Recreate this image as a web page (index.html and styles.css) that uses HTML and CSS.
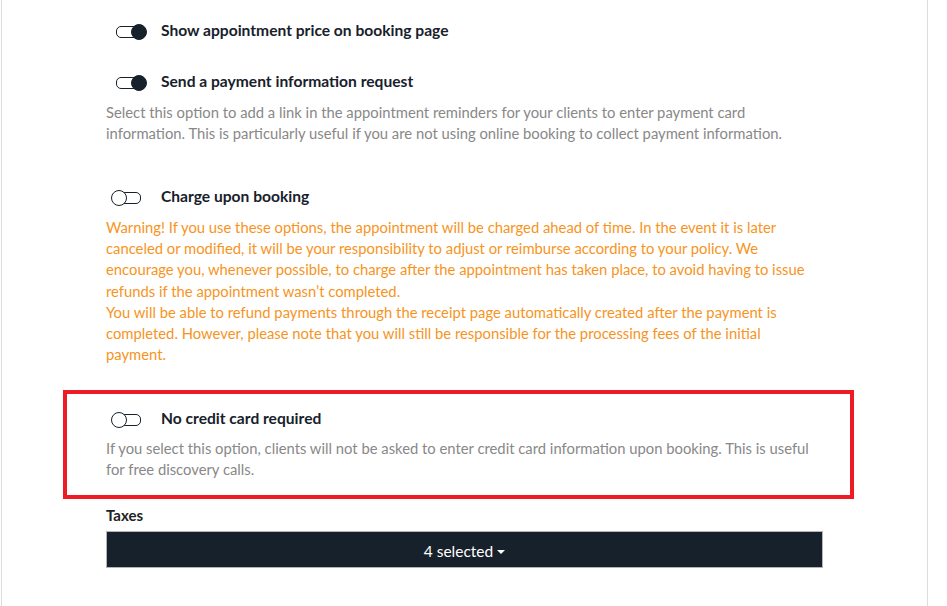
FILE: index.html
```html
<!DOCTYPE html>
<html lang="en">
<head>
<meta charset="utf-8">
<title>Payment settings</title>
<link rel="stylesheet" href="styles.css">
</head>
<body>
<div class="page">
  <div class="content">
    <div class="option opt-first">
      <div class="option-row">
        <span class="toggle on"></span>
        <span class="option-title">Show appointment price on booking page</span>
      </div>
    </div>
    <div class="option opt-second">
      <div class="option-row">
        <span class="toggle on"></span>
        <span class="option-title">Send a payment information request</span>
      </div>
      <p class="desc">Select this option to add a link in the appointment reminders for your clients to enter payment card information. This is particularly useful if you are not using online booking to collect payment information.</p>
    </div>
    <div class="option opt-third">
      <div class="option-row">
        <span class="toggle"></span>
        <span class="option-title">Charge upon booking</span>
      </div>
      <p class="desc warn">Warning! If you use these options, the appointment will be charged ahead of time. In the event it is later canceled or modified, it will be your responsibility to adjust or reimburse according to your policy. We encourage you, whenever possible, to charge after the appointment has taken place, to avoid having to issue refunds if the appointment wasn’t completed.<br>You will be able to refund payments through the receipt page automatically created after the payment is completed. However, please note that you will still be responsible for the processing fees of the initial payment.</p>
    </div>
    <div class="option highlighted">
      <div class="option-row">
        <span class="toggle"></span>
        <span class="option-title">No credit card required</span>
      </div>
      <p class="desc">If you select this option, clients will not be asked to enter credit card information upon booking. This is useful for free discovery calls.</p>
    </div>
    <div class="field">
      <label class="field-label">Taxes</label>
      <button class="select-btn" type="button">4 selected <span class="caret"></span></button>
    </div>
  </div>
</div>
</body>
</html>
```
FILE: styles.css
```css
* { box-sizing: border-box; }
html, body { margin: 0; padding: 0; background: #fff; }
body {
  font-family: Lato, "Open Sans", "Liberation Sans", sans-serif;
  font-size: 15px;
  color: #17212b;
}
.page {
  margin-left: 1px;
  width: 927px;
  min-height: 606px;
  border-left: 1px solid #dcdcdc;
  border-right: 1px solid #dcdcdc;
}
.content {
  width: 717px;
  margin-left: 104px;
  padding-top: 20px;
}
.option-row {
  display: flex;
  align-items: center;
  height: 21px;
}
.option-title {
  font-weight: 700;
  font-size: 15.6px;
  line-height: 21px;
  color: #17212b;
}
.desc {
  margin: 10px 0 0;
  font-size: 14.8px;
  line-height: 21.2px;
  color: #888888;
}
.desc.warn { color: #f7941d; margin-top: 9.5px; }
.opt-first { margin-bottom: 30px; }
.opt-second { margin-bottom: 42px; }
.opt-third { margin-bottom: 25px; }

.toggle {
  position: relative;
  flex: none;
  width: 34px;
  height: 14px;
  margin-left: 5px;
  margin-right: 16px;
}
.toggle::before {
  content: "";
  position: absolute;
  left: 5px;
  right: 4px;
  top: 2px;
  height: 10px;
  border: 1.3px solid #17212b;
  border-radius: 5px;
  background: #fff;
}
.toggle::after {
  content: "";
  position: absolute;
  left: 0;
  top: 0;
  width: 14px;
  height: 14px;
  border-radius: 50%;
  border: 1.3px solid #17212b;
  background: #fff;
}
.toggle.on::after {
  left: 20px;
  background: #17212b;
}

.highlighted {
  margin: 0 -31px 0 -43px;
  padding: 14px 27px 14.5px 39px;
  border: 4px solid #ed1c24;
}
.highlighted .desc { margin-top: 8.5px; }
.field { margin-top: 6px; }
.field-label {
  display: block;
  font-weight: 700;
  font-size: 15px;
  line-height: 21px;
  color: #222;
  margin-bottom: 5px;
}
.select-btn {
  display: flex;
  align-items: center;
  justify-content: center;
  width: 717px;
  height: 37px;
  background: #17212b;
  border: 1px solid #b5b5b5;
  color: #fff;
  font-family: Lato, "Open Sans", "Liberation Sans", sans-serif;
  font-size: 15.5px;
  padding: 3px 0 0;
}
.caret {
  display: inline-block;
  width: 0;
  height: 0;
  margin-left: 4px;
  margin-top: 2px;
  border-left: 4px solid transparent;
  border-right: 4px solid transparent;
  border-top: 4px solid #fff;
}
```
